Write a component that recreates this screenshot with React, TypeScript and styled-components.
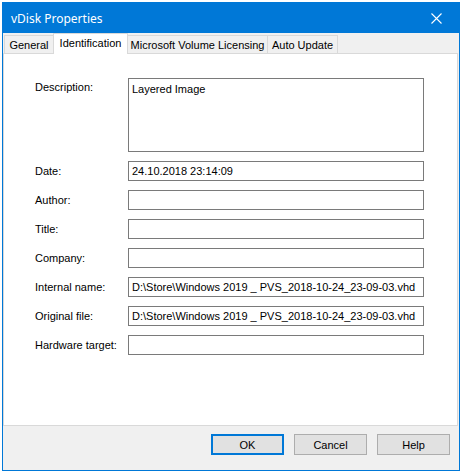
import { Fragment } from 'react';
import styled, { createGlobalStyle } from 'styled-components';

const GlobalStyle = createGlobalStyle`
  html, body {
    margin: 0;
    padding: 0;
    background: #ffffff;
  }
  body {
    font-family: 'Liberation Sans', Arial, sans-serif;
    font-size: 11px;
    color: #000;
  }
`;

const Page = styled.div`
  width: 464px;
  height: 474px;
  padding: 2px 0 0 2px;
  box-sizing: border-box;
`;

const Window = styled.div`
  width: 458px;
  height: 469px;
  box-sizing: border-box;
  border: 1px solid #0078d7;
  display: flex;
  flex-direction: column;
  background: #f0f0f0;
`;

const TitleBar = styled.div`
  height: 30px;
  flex: none;
  background: #0078d7;
  color: #fff;
  display: flex;
  align-items: center;
  justify-content: space-between;
  padding-left: 8px;
  font-family: 'Segoe UI', 'Noto Sans', sans-serif;
  font-size: 12px;
`;

const CloseButton = styled.div`
  width: 46px;
  height: 30px;
  display: flex;
  align-items: center;
  justify-content: center;
`;

const TabStrip = styled.div`
  height: 20px;
  flex: none;
  display: flex;
  align-items: flex-end;
  padding-left: 1px;
  position: relative;
  z-index: 1;
`;

const Tab = styled.div<{ $w: number; $active?: boolean }>`
  width: ${(p) => p.$w}px;
  height: ${(p) => (p.$active ? 21 : 18)}px;
  margin-bottom: ${(p) => (p.$active ? -1 : 0)}px;
  margin-left: -1px;
  box-sizing: border-box;
  border: 1px solid #d9d9d9;
  border-bottom: none;
  background: ${(p) => (p.$active ? '#ffffff' : '#f0f0f0')};
  display: flex;
  align-items: ${(p) => (p.$active ? 'flex-start' : 'center')};
  padding-top: ${(p) => (p.$active ? 3 : 0)}px;
  justify-content: center;
  white-space: nowrap;
  &:first-child {
    margin-left: 0;
  }
`;

const Panel = styled.div`
  flex: 1;
  margin-right: 1px;
  background: #fff;
  border: 1px solid #d9d9d9;
  padding: 24px 0 0 31px;
`;

const Form = styled.div`
  display: grid;
  grid-template-columns: 93px 296px;
  row-gap: 9px;
`;

const Label = styled.div<{ $top?: boolean }>`
  display: flex;
  align-items: ${(p) => (p.$top ? 'flex-start' : 'center')};
  padding-top: ${(p) => (p.$top ? 3 : 0)}px;
  height: ${(p) => (p.$top ? 'auto' : '20px')};
`;

const Field = styled.div<{ $tall?: boolean }>`
  height: ${(p) => (p.$tall ? 74 : 20)}px;
  box-sizing: border-box;
  border: 1px solid #7a7a7a;
  padding: ${(p) => (p.$tall ? '4px 3px' : '0 3px')};
  display: flex;
  align-items: ${(p) => (p.$tall ? 'flex-start' : 'center')};
  white-space: nowrap;
  overflow: hidden;
`;

const Footer = styled.div`
  height: 44px;
  flex: none;
  display: flex;
  justify-content: flex-end;
  align-items: flex-start;
  gap: 10px;
  padding: 8px 9px 0 0;
  box-sizing: border-box;
`;

const Button = styled.div<{ $default?: boolean }>`
  width: 73px;
  height: 21px;
  box-sizing: border-box;
  background: #e1e1e1;
  border: ${(p) => (p.$default ? '2px solid #0078d7' : '1px solid #adadad')};
  display: flex;
  align-items: center;
  justify-content: center;
`;

const rows: [string, string][] = [
  ['Date:', '24.10.2018 23:14:09'],
  ['Author:', ''],
  ['Title:', ''],
  ['Company:', ''],
  ['Internal name:', 'D:\\Store\\Windows 2019 _ PVS_2018-10-24_23-09-03.vhd'],
  ['Original file:', 'D:\\Store\\Windows 2019 _ PVS_2018-10-24_23-09-03.vhd'],
  ['Hardware target:', ''],
];

export default function App() {
  return (
    <Page>
      <GlobalStyle />
      <Window>
        <TitleBar>
          <span>vDisk Properties</span>
          <CloseButton>
            <svg width="11" height="11" viewBox="0 0 11 11">
              <path d="M0.5 0.5 L10.5 10.5 M10.5 0.5 L0.5 10.5" stroke="#fff" strokeWidth="1.1" />
            </svg>
          </CloseButton>
        </TitleBar>
        <TabStrip>
          <Tab $w={50}>General</Tab>
          <Tab $w={75} $active>Identification</Tab>
          <Tab $w={141}>Microsoft Volume Licensing</Tab>
          <Tab $w={71}>Auto Update</Tab>
        </TabStrip>
        <Panel>
          <Form>
            <Label $top>Description:</Label>
            <Field $tall>Layered Image</Field>
            {rows.map(([label, value]) => (
              <Fragment key={label}>
                <Label>{label}</Label>
                <Field>{value}</Field>
              </Fragment>
            ))}
          </Form>
        </Panel>
        <Footer>
          <Button $default>OK</Button>
          <Button>Cancel</Button>
          <Button>Help</Button>
        </Footer>
      </Window>
    </Page>
  );
}
